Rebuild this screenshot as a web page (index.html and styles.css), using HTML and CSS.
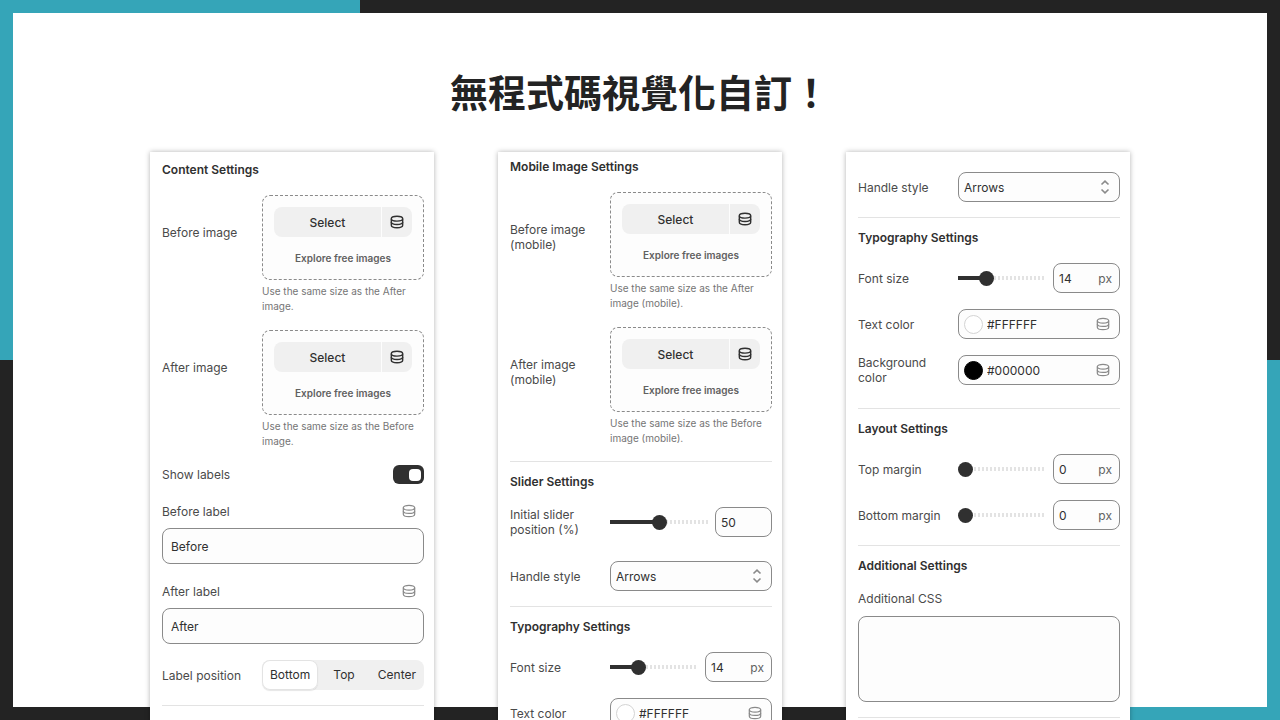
FILE: index.html
```
<!DOCTYPE html>
<html lang="zh-Hant">
<head>
    <meta charset="UTF-8">
    <meta name="viewport" content="width=device-width, initial-scale=1.0">
    <title>無程式碼視覺化自訂！</title>
    <link rel="stylesheet" href="styles.css">
</head>
<body>
    <!-- Shared icons -->
    <svg class="icon-defs" aria-hidden="true">
        <symbol id="icon-data" viewBox="0 0 16 16">
            <path d="M8 1.500c3.800 0 6.500 1 6.500 2.800S11.800 7 8 7 1.500 6.100 1.500 4.300 4.200 1.500 8 1.500z"/>
            <path d="M1.500 4.300v7.400c0 1.800 2.700 2.800 6.500 2.800s6.500-1 6.500-2.800V4.300"/>
            <path d="M1.500 8c0 1.800 2.700 2.800 6.500 2.800s6.500-1 6.500-2.800"/>
        </symbol>
        <symbol id="icon-updown" viewBox="0 0 10 14">
            <path d="M1.500 4.500 5 1.200l3.500 3.300M1.500 9.500 5 12.800l3.500-3.300"/>
        </symbol>
    </svg>

    <main class="slide">
        <h1 class="title">無程式碼視覺化自訂！</h1>

        <div class="panels">
            <!-- Content -->
            <div class="panel panel-content">
                <section class="section">
                    <h2>Content Settings</h2>
                    <div class="row row-image">
                        <span class="label">Before image</span>
                        <div>
                            <div class="picker">
                                <div class="picker-buttons">
                                    <button type="button" class="btn btn-select">Select</button>
                                    <button type="button" class="btn btn-data" aria-label="Connect data"><svg class="icon"><use href="#icon-data"/></svg></button>
                                </div>
                                <a class="explore" href="#">Explore free images</a>
                            </div>
                            <p class="help">Use the same size as the After image.</p>
                        </div>
                    </div>
                    <div class="row row-image">
                        <span class="label">After image</span>
                        <div>
                            <div class="picker">
                                <div class="picker-buttons">
                                    <button type="button" class="btn btn-select">Select</button>
                                    <button type="button" class="btn btn-data" aria-label="Connect data"><svg class="icon"><use href="#icon-data"/></svg></button>
                                </div>
                                <a class="explore" href="#">Explore free images</a>
                            </div>
                            <p class="help">Use the same size as the Before image.</p>
                        </div>
                    </div>
                    <div class="row-toggle">
                        <label class="label" for="show-labels">Show labels</label>
                        <input type="checkbox" id="show-labels" class="toggle" checked>
                    </div>
                    <div class="stack">
                        <div class="stack-head">
                            <label class="label" for="before-label">Before label</label>
                            <svg class="icon icon-muted"><use href="#icon-data"/></svg>
                        </div>
                        <input type="text" id="before-label" class="text-input" value="Before">
                    </div>
                    <div class="stack">
                        <div class="stack-head">
                            <label class="label" for="after-label">After label</label>
                            <svg class="icon icon-muted"><use href="#icon-data"/></svg>
                        </div>
                        <input type="text" id="after-label" class="text-input" value="After">
                    </div>
                    <div class="row">
                        <span class="label" id="position-label">Label position</span>
                        <div class="segmented" role="radiogroup" aria-labelledby="position-label">
                            <label><input type="radio" name="position" checked><span>Bottom</span></label>
                            <label><input type="radio" name="position"><span>Top</span></label>
                            <label><input type="radio" name="position"><span>Center</span></label>
                        </div>
                    </div>
                </section>
                <section class="section"></section>
            </div>

            <!-- Mobile images and slider -->
            <div class="panel panel-mobile">
                <section class="section">
                    <h2>Mobile Image Settings</h2>
                    <div class="row row-image">
                        <span class="label">Before image (mobile)</span>
                        <div>
                            <div class="picker">
                                <div class="picker-buttons">
                                    <button type="button" class="btn btn-select">Select</button>
                                    <button type="button" class="btn btn-data" aria-label="Connect data"><svg class="icon"><use href="#icon-data"/></svg></button>
                                </div>
                                <a class="explore" href="#">Explore free images</a>
                            </div>
                            <p class="help">Use the same size as the After image (mobile).</p>
                        </div>
                    </div>
                    <div class="row row-image">
                        <span class="label">After image (mobile)</span>
                        <div>
                            <div class="picker">
                                <div class="picker-buttons">
                                    <button type="button" class="btn btn-select">Select</button>
                                    <button type="button" class="btn btn-data" aria-label="Connect data"><svg class="icon"><use href="#icon-data"/></svg></button>
                                </div>
                                <a class="explore" href="#">Explore free images</a>
                            </div>
                            <p class="help">Use the same size as the Before image (mobile).</p>
                        </div>
                    </div>
                </section>
                <section class="section">
                    <h2>Slider Settings</h2>
                    <div class="row row-tall">
                        <label class="label" for="initial">Initial slider position (%)</label>
                        <div class="range-field">
                            <input type="range" id="initial" class="range" min="0" max="100" value="50" style="--fill: 50%">
                            <div class="number"><input type="text" value="50" aria-label="Initial slider position"></div>
                        </div>
                    </div>
                    <div class="row">
                        <label class="label" for="handle-a">Handle style</label>
                        <div class="select">
                            <select id="handle-a"><option>Arrows</option></select>
                            <svg class="icon-updown"><use href="#icon-updown"/></svg>
                        </div>
                    </div>
                </section>
                <section class="section">
                    <h2>Typography Settings</h2>
                    <div class="row">
                        <label class="label" for="size-a">Font size</label>
                        <div class="range-field">
                            <input type="range" id="size-a" class="range" min="0" max="48" value="14" style="--fill: 29%">
                            <div class="number number-unit"><input type="text" value="14" aria-label="Font size"><span>px</span></div>
                        </div>
                    </div>
                    <div class="row">
                        <label class="label" for="text-color-a">Text color</label>
                        <div class="color">
                            <span class="swatch"></span>
                            <input type="text" id="text-color-a" value="#FFFFFF">
                            <svg class="icon icon-muted"><use href="#icon-data"/></svg>
                        </div>
                    </div>
                </section>
            </div>

            <!-- Typography, layout, CSS -->
            <div class="panel panel-style">
                <section class="section">
                    <div class="row">
                        <label class="label" for="handle-b">Handle style</label>
                        <div class="select">
                            <select id="handle-b"><option>Arrows</option></select>
                            <svg class="icon-updown"><use href="#icon-updown"/></svg>
                        </div>
                    </div>
                </section>
                <section class="section">
                    <h2>Typography Settings</h2>
                    <div class="row">
                        <label class="label" for="size-b">Font size</label>
                        <div class="range-field">
                            <input type="range" id="size-b" class="range" min="0" max="48" value="14" style="--fill: 29%">
                            <div class="number number-unit"><input type="text" value="14" aria-label="Font size"><span>px</span></div>
                        </div>
                    </div>
                    <div class="row">
                        <label class="label" for="text-color-b">Text color</label>
                        <div class="color">
                            <span class="swatch"></span>
                            <input type="text" id="text-color-b" value="#FFFFFF">
                            <svg class="icon icon-muted"><use href="#icon-data"/></svg>
                        </div>
                    </div>
                    <div class="row row-tall">
                        <label class="label" for="bg-color">Background color</label>
                        <div class="color">
                            <span class="swatch swatch-black"></span>
                            <input type="text" id="bg-color" value="#000000">
                            <svg class="icon icon-muted"><use href="#icon-data"/></svg>
                        </div>
                    </div>
                </section>
                <section class="section">
                    <h2>Layout Settings</h2>
                    <div class="row">
                        <label class="label" for="margin-top">Top margin</label>
                        <div class="range-field">
                            <input type="range" id="margin-top" class="range" min="0" max="100" value="0" style="--fill: 0%">
                            <div class="number number-unit"><input type="text" value="0" aria-label="Top margin"><span>px</span></div>
                        </div>
                    </div>
                    <div class="row">
                        <label class="label" for="margin-bottom">Bottom margin</label>
                        <div class="range-field">
                            <input type="range" id="margin-bottom" class="range" min="0" max="100" value="0" style="--fill: 0%">
                            <div class="number number-unit"><input type="text" value="0" aria-label="Bottom margin"><span>px</span></div>
                        </div>
                    </div>
                </section>
                <section class="section">
                    <h2>Additional Settings</h2>
                    <div class="stack stack-css">
                        <label class="label" for="css">Additional CSS</label>
                        <textarea id="css" class="css-input"></textarea>
                    </div>
                </section>
                <section class="section"></section>
            </div>
        </div>
    </main>
</body>
</html>
```
FILE: styles.css
```
* {
    margin: 0;
    padding: 0;
    box-sizing: border-box;
}

body {
    height: 100vh;
    overflow: hidden;
    font-family: Inter, 'Noto Sans CJK TC', sans-serif;
    font-size: 12px;
    line-height: 15px;
    color: #303030;
    background: #232323;
}

input,
select,
button,
textarea {
    font: inherit;
    color: inherit;
}

.icon-defs {
    position: absolute;
    width: 0;
    height: 0;
}

/* Two-tone frame around the white slide */
.slide {
    position: relative;
    height: 100vh;
    padding-top: 61px;
    background:
        linear-gradient(#35a5b8, #35a5b8) left top / 360px 50% no-repeat,
        linear-gradient(#35a5b8, #35a5b8) right bottom / 360px 50% no-repeat;
}

.slide::before {
    content: "";
    position: absolute;
    inset: 13px;
    background: white;
}

.title {
    position: relative;
    margin-bottom: 31px;
    text-align: center;
    font-family: 'Noto Sans CJK TC', sans-serif;
    font-size: 38px;
    line-height: 60px;
    font-weight: 700;
    color: #232323;
}

.panels {
    position: relative;
    display: grid;
    grid-template-columns: repeat(3, 1fr);
    gap: 64px;
    max-width: 980px;
    margin: 0 auto;
}

.panel {
    padding: 0 10px 0 12px;
    background: white;
    box-shadow: 0 0 5px rgba(0, 0, 0, 0.3);
}

.panel-content {
    padding-top: 8px;
}

.panel-mobile {
    padding-top: 5px;
}

.panel-style {
    padding-top: 20px;
}

.section {
    display: flex;
    flex-direction: column;
    gap: 16px;
    padding-bottom: 15px;
}

.section + .section {
    padding-top: 10px;
    border-top: 1px solid #e3e3e3;
}

.section h2 {
    margin-bottom: -1px;
    font-size: 12px;
    line-height: 20px;
    font-weight: 600;
}

.label {
    color: #4a4a4a;
}

/* Rows */
.row {
    display: grid;
    grid-template-columns: 1fr 162px;
    align-items: center;
}

.row .label {
    padding-right: 16px;
}

.row-tall {
    margin-bottom: 8px;
}

.row-image {
    align-items: start;
}

.row-image .label {
    padding-top: 30px;
}

.row-toggle {
    display: flex;
    align-items: center;
    justify-content: space-between;
}

/* Image picker */
.picker {
    height: 85px;
    padding: 11px;
    border: 1px dashed #8a8a8a;
    border-radius: 8px;
    background: #fdfdfd;
    text-align: center;
}

.picker-buttons {
    display: flex;
    gap: 1px;
    margin-bottom: 14px;
}

.btn {
    height: 30px;
    border: none;
    background: #f0f0f0;
    font-weight: 500;
}

.btn-select {
    flex: 1;
    border-radius: 8px 0 0 8px;
}

.btn-data {
    display: flex;
    align-items: center;
    justify-content: center;
    width: 30px;
    border-radius: 0 8px 8px 0;
}

.explore {
    display: block;
    font-size: 10px;
    font-weight: 600;
    color: #616161;
    text-decoration: none;
}

.help {
    margin-top: 4px;
    font-size: 10px;
    color: #757575;
}

.icon {
    width: 14px;
    height: 14px;
    fill: none;
    stroke: #303030;
    stroke-width: 1.6;
}

.icon-muted {
    stroke: #8a8a8a;
    stroke-width: 1.4;
}

/* Toggle */
.toggle {
    display: flex;
    align-items: center;
    justify-content: flex-end;
    width: 31px;
    height: 19px;
    padding: 3px;
    appearance: none;
    border-radius: 6px;
    background: #303030;
}

.toggle::after {
    content: "";
    width: 12px;
    height: 12px;
    border-radius: 4px;
    background: white;
}

/* Stacked fields */
.stack-head {
    display: flex;
    align-items: center;
    justify-content: space-between;
    height: 22px;
    margin-bottom: 6px;
    padding-right: 8px;
}

.text-input,
.css-input {
    display: block;
    width: 100%;
    height: 36px;
    padding: 0 8px;
    border: 1px solid #8a8a8a;
    border-radius: 8px;
    background: #fdfdfd;
}

.stack-css .label {
    display: block;
    margin-bottom: 10px;
}

.css-input {
    height: 86px;
    resize: none;
}

/* Segmented control */
.segmented {
    display: flex;
    justify-content: space-between;
    height: 30px;
    border-radius: 8px;
    background: #f0f0f0;
}

.segmented label {
    position: relative;
    display: flex;
}

.segmented input {
    position: absolute;
    opacity: 0;
}

.segmented span {
    padding: 0 8px;
    border-radius: 8px;
    line-height: 30px;
    text-align: center;
}

.segmented input:checked + span {
    background: white;
    box-shadow: inset 0 0 0 1px #e3e3e3, 0 1px 1px rgba(0, 0, 0, 0.1);
}

/* Boxed controls */
.number,
.select,
.color {
    display: flex;
    align-items: center;
    height: 30px;
    padding: 0 5px;
    border: 1px solid #8a8a8a;
    border-radius: 8px;
    background: #fdfdfd;
}

.number input,
.color input,
.select select {
    flex: 1;
    width: 0;
    min-width: 0;
    border: none;
    outline: none;
    background: none;
    appearance: none;
}

.number {
    width: 57px;
}

.number-unit {
    width: 67px;
    padding-right: 7px;
}

.number span {
    color: #616161;
}

.icon-updown {
    width: 10px;
    height: 14px;
    margin-right: 4px;
    fill: none;
    stroke: #8a8a8a;
    stroke-width: 1.6;
    pointer-events: none;
}

.color {
    padding-right: 9px;
}

.swatch {
    width: 19px;
    height: 19px;
    margin-right: 4px;
    border: 1px solid #d4d4d4;
    border-radius: 50%;
    background: white;
}

.swatch-black {
    border-color: black;
    background: black;
}

/* Range */
.range-field {
    display: flex;
    align-items: center;
    gap: 7px;
}

.range {
    flex: 1;
    width: 0;
    min-width: 0;
    height: 15px;
    appearance: none;
    background:
        linear-gradient(#303030, #303030) left center / var(--fill) 4px no-repeat,
        repeating-linear-gradient(90deg, #e3e3e3 0 2px, transparent 2px 4px) left center / 100% 4px no-repeat;
}

.range::-webkit-slider-thumb {
    appearance: none;
    width: 15px;
    height: 15px;
    border-radius: 50%;
    background: #303030;
}
```
